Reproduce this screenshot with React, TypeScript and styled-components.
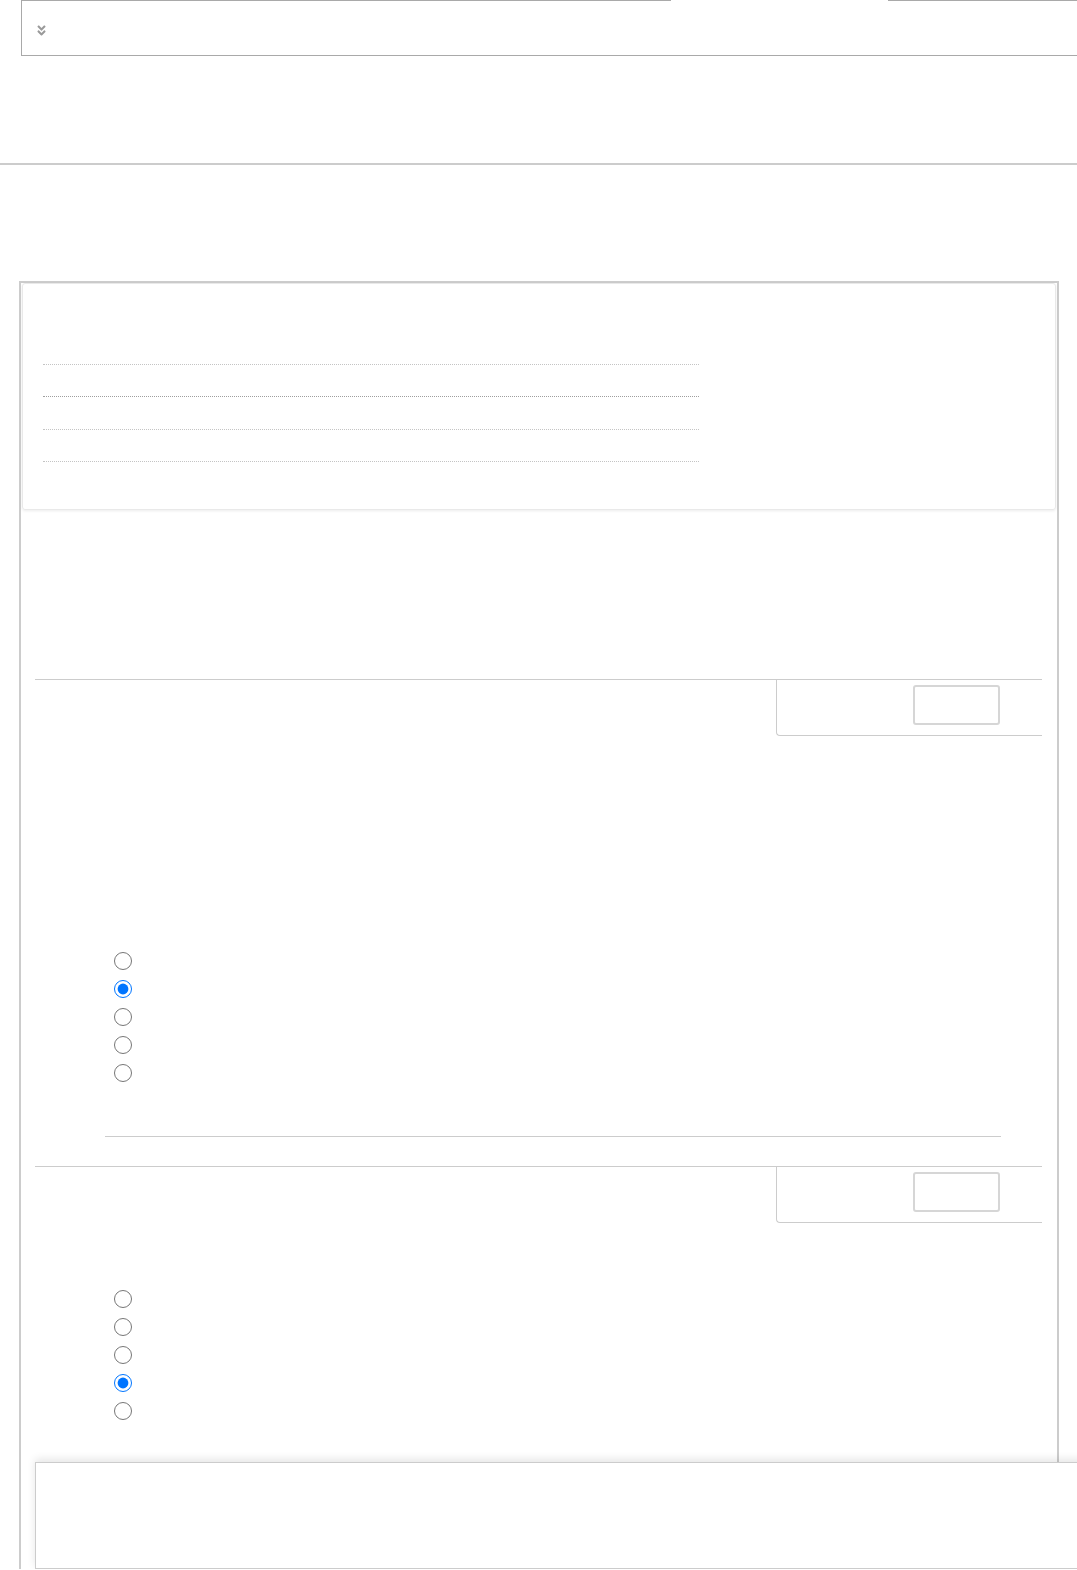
import React from 'react';
import styled, { createGlobalStyle } from 'styled-components';
import { FaAngleDoubleDown } from 'react-icons/fa';

const GlobalStyle = createGlobalStyle`
  html, body {
    margin: 0;
    padding: 0;
    background: #fff;
    overflow: hidden;
    font-family: "Liberation Sans", Arial, sans-serif;
  }
`;

const Page = styled.div`
  width: 1077px;
  display: flex;
  flex-direction: column;
`;

const TopBox = styled.div`
  margin-left: 21px;
  margin-right: -30px;
  height: 55px;
  border-left: 1px solid #a9a9a9;
  border-bottom: 1px solid #a9a9a9;
  display: flex;
  flex-direction: column;
`;

const TopEdge = styled.div`
  display: flex;
  height: 1px;
`;

const EdgeLine = styled.div<{ $width?: number }>`
  height: 1px;
  background: #a9a9a9;
  ${({ $width }) => ($width ? `width: ${$width}px;` : 'flex: 1;')}
`;

const EdgeGap = styled.div`
  width: 217px;
`;

const Toggle = styled.button`
  all: unset;
  display: flex;
  padding: 23px 0 0 13px;
  color: #9a9a9a;
  width: 13px;
`;

const Rule = styled.hr`
  margin: 107px 0 0;
  border: 0;
  height: 2px;
  background: #cccccc;
`;

const Panel = styled.div`
  margin: 116px 0 0 19px;
  width: 1036px;
  border: 2px solid #cccccc;
  border-bottom: 0;
  display: flex;
  flex-direction: column;
`;

const Card = styled.div`
  margin: 0 1px;
  height: 227px;
  padding: 48px 20px 0;
  border: 1px solid #e9e9e9;
  border-radius: 3px;
  box-shadow: 0 1px 3px rgba(0, 0, 0, 0.08);
  box-sizing: border-box;
`;

const TocList = styled.ul`
  list-style: none;
  margin: 0;
  padding: 0;
  width: 656px;
`;

const TocItem = styled.li<{ $strong?: boolean }>`
  height: 31.5px;
  border-bottom: 1px dotted ${({ $strong }) => ($strong ? '#9e9e9e' : '#c4c4c4')};
`;

const Section = styled.section<{ $top: number }>`
  margin: ${({ $top }) => $top}px 15px 0 14px;
  display: flex;
  flex-direction: column;
`;

const SectionHead = styled.div`
  border-top: 1px solid #cccccc;
  display: flex;
  justify-content: flex-end;
`;

const Tools = styled.div`
  width: 266px;
  height: 56px;
  border-left: 1px solid #cccccc;
  border-bottom: 1px solid #cccccc;
  border-bottom-left-radius: 4px;
  box-sizing: border-box;
  padding: 5px 42px 0 0;
  display: flex;
  justify-content: flex-end;
  align-items: flex-start;
`;

const ToolButton = styled.button`
  width: 87px;
  height: 40px;
  background: #fff;
  border: 2px solid #d6d6d6;
  border-radius: 3px;
  box-sizing: border-box;
`;

const Choices = styled.div<{ $top: number }>`
  margin-top: ${({ $top }) => $top}px;
  padding-left: 79px;
  display: flex;
  flex-direction: column;
`;

const Choice = styled.label`
  height: 28px;
  display: flex;
  align-items: center;
`;

const Radio = styled.input`
  width: 18px;
  height: 18px;
  margin: 0;
`;

const SubRule = styled.div`
  margin: 49px 41px 0 70px;
  height: 1px;
  background: #cccccc;
`;

const Footer = styled.div`
  position: relative;
  margin: 37px -40px 0 14px;
  height: 107px;
  background: #fff;
  border: 1px solid #cccccc;
  border-right: 0;
  box-sizing: border-box;
  box-shadow: 0 -3px 8px rgba(0, 0, 0, 0.1);
`;

const Question = ({ name, checked, top, children }: { name: string; checked: number; top: number; children?: React.ReactNode }) => (
  <>
    <SectionHead>
      <Tools>
        <ToolButton type="button" />
      </Tools>
    </SectionHead>
    <Choices $top={top}>
      {[0, 1, 2, 3, 4].map(i => (
        <Choice key={i}>
          <Radio type="radio" name={name} defaultChecked={i === checked} />
        </Choice>
      ))}
    </Choices>
    {children}
  </>
);

export default function App() {
  return (
    <Page>
      <GlobalStyle />
      <TopBox>
        <TopEdge>
          <EdgeLine $width={649} />
          <EdgeGap />
          <EdgeLine />
        </TopEdge>
        <Toggle>
          <FaAngleDoubleDown size={13} />
        </Toggle>
      </TopBox>
      <Rule />
      <Panel>
        <Card>
          <TocList>
            <TocItem />
            <TocItem $strong />
            <TocItem />
            <TocItem />
          </TocList>
        </Card>
        <Section $top={169}>
          <Question name="q1" checked={1} top={211}>
            <SubRule />
          </Question>
        </Section>
        <Section $top={29}>
          <Question name="q2" checked={3} top={62} />
        </Section>
        <Footer />
      </Panel>
    </Page>
  );
}
